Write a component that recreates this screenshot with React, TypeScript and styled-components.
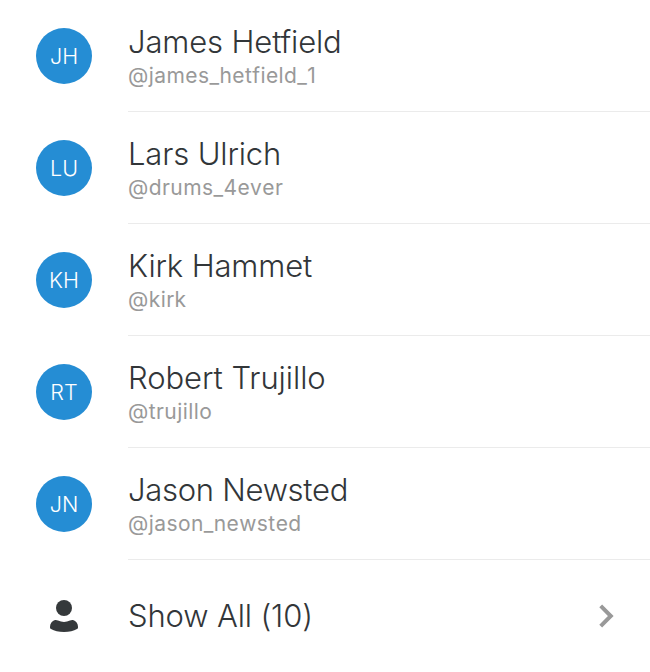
import React from 'react';
import styled, { createGlobalStyle } from 'styled-components';

const GlobalStyle = createGlobalStyle`
  * { box-sizing: border-box; }
  body { margin: 0; background: #fff; font-family: Inter, "Liberation Sans", sans-serif; }
`;
const List = styled.main`
  height: 672px;
  overflow: hidden;
  background: #fff;
`;
const Row = styled.div`
  display: flex;
  height: 112px;
  padding-left: 36px;
`;
const Avatar = styled.div`
  flex: none;
  display: flex;
  align-items: center;
  justify-content: center;
  width: 56px;
  height: 56px;
  margin: 28px 36px 0 0;
  border-radius: 50%;
  background: #258dd4;
  color: #fff;
  font-size: 21.5px;
  font-weight: 300;
`;
const Details = styled.div`
  flex: 1;
  display: flex;
  flex-direction: column;
  align-items: flex-start;
  padding-top: 22px;
  border-bottom: 1px solid #ebebeb;
`;
const Name = styled.span<{ $tracking?: number }>`
  font-size: 31px;
  line-height: 40px;
  font-weight: 300;
  letter-spacing: ${({ $tracking = -0.14 }) => $tracking}px;
  color: #323639;
  white-space: nowrap;
`;
const Handle = styled.span`
  font-size: 21px;
  line-height: 27px;
  font-kerning: none;
  letter-spacing: 0.42px;
  color: #999;
  white-space: nowrap;
`;
const ShowAll = styled.div`
  display: flex;
  align-items: center;
  height: 112px;
  padding: 0 35px 0 36px;
`;
const IconSlot = styled.div`
  display: flex;
  justify-content: center;
  width: 56px;
  margin-right: 36px;
`;
const Chevron = styled.svg`
  margin-left: auto;
`;

const people = [
  { initials: 'JH', name: 'James Hetfield', handle: '@james_hetfield_1' },
  { initials: 'LU', name: 'Lars Ulrich', handle: '@drums_4ever' },
  { initials: 'KH', name: 'Kirk Hammet', handle: '@kirk' },
  { initials: 'RT', name: 'Robert Trujillo', handle: '@trujillo', tracking: -0.06 },
  { initials: 'JN', name: 'Jason Newsted', handle: '@jason_newsted', tracking: -0.28 },
];

export default function App() {
  return (
    <List>
      <GlobalStyle />
      {people.map((p) => (
        <Row key={p.handle}>
          <Avatar>{p.initials}</Avatar>
          <Details>
            <Name $tracking={p.tracking}>{p.name}</Name>
            <Handle>{p.handle}</Handle>
          </Details>
        </Row>
      ))}
      <ShowAll>
        <IconSlot>
          <svg width="28" height="32" viewBox="0 0 28 32" fill="#35393b">
            <circle cx="14" cy="8" r="8" />
            <path d="M5 20.1Q6.5 19.8 8 20.6Q14 23.2 20 20.6Q21.5 19.8 23 20.1C26 20.9 28 23.6 28 26.8V27.6Q28 28.6 27 29.1Q22 32 14 32Q6 32 1 29.1Q0 28.6 0 27.6V26.8C0 23.6 2 20.9 5 20.1Z" />
          </svg>
        </IconSlot>
        <Name>Show All (10)</Name>
        <Chevron width="16" height="24" viewBox="0 0 16 24" fill="none" stroke="#999" strokeWidth="4">
          <path d="M1.7 1.9L11.8 12L1.7 22.1" />
        </Chevron>
      </ShowAll>
    </List>
  );
}
